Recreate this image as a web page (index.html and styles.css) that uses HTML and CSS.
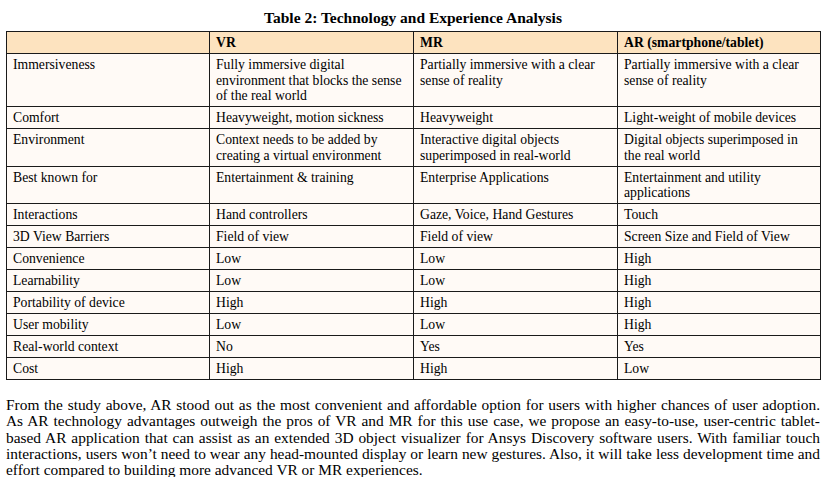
FILE: index.html
```html
<!DOCTYPE html>
<html>
<head>
<meta charset="utf-8">
<link rel="stylesheet" href="styles.css">
</head>
<body>
<div class="page">
  <h1 class="caption">Table 2: Technology and Experience Analysis</h1>
  <table class="analysis">
    <colgroup>
      <col class="c1"><col class="c2"><col class="c3"><col class="c4">
    </colgroup>
    <thead>
      <tr><th></th><th>VR</th><th>MR</th><th>AR (smartphone/tablet)</th></tr>
    </thead>
    <tbody>
      <tr><td>Immersiveness</td><td>Fully immersive digital environment that blocks the sense of the real world</td><td>Partially immersive with a clear sense of reality</td><td>Partially immersive with a clear sense of reality</td></tr>
      <tr><td>Comfort</td><td>Heavyweight, motion sickness</td><td>Heavyweight</td><td>Light-weight of mobile devices</td></tr>
      <tr><td>Environment</td><td>Context needs to be added by creating a virtual environment</td><td>Interactive digital objects superimposed in real-world</td><td>Digital objects superimposed in the real world</td></tr>
      <tr><td>Best known for</td><td>Entertainment &amp; training</td><td>Enterprise Applications</td><td>Entertainment and utility applications</td></tr>
      <tr><td>Interactions</td><td>Hand controllers</td><td>Gaze, Voice, Hand Gestures</td><td>Touch</td></tr>
      <tr><td>3D View Barriers</td><td>Field of view</td><td>Field of view</td><td>Screen Size and Field of View</td></tr>
      <tr><td>Convenience</td><td>Low</td><td>Low</td><td>High</td></tr>
      <tr><td>Learnability</td><td>Low</td><td>Low</td><td>High</td></tr>
      <tr><td>Portability of device</td><td>High</td><td>High</td><td>High</td></tr>
      <tr><td>User mobility</td><td>Low</td><td>Low</td><td>High</td></tr>
      <tr><td>Real-world context</td><td>No</td><td>Yes</td><td>Yes</td></tr>
      <tr><td>Cost</td><td>High</td><td>High</td><td>Low</td></tr>
    </tbody>
  </table>
  <p class="body-text">From the study above, AR stood out as the most convenient and affordable option for users with higher chances of user adoption. As AR technology advantages outweigh the pros of VR and MR for this use case, we propose an easy-to-use, user-centric tablet-based AR application that can assist as an extended 3D object visualizer for Ansys Discovery software users. With familiar touch interactions, users won’t need to wear any head-mounted display or learn new gestures. Also, it will take less development time and effort compared to building more advanced VR or MR experiences.</p>
</div>
</body>
</html>
```

FILE: styles.css
```css
html, body {
  margin: 0;
  padding: 0;
  background: #ffffff;
}

.page {
  padding: 9px 6px 0 6px;
  width: 814px;
  font-family: "Liberation Serif", "Times New Roman", Times, serif;
  color: #000;
}

.caption {
  margin: 0 0 4px 0;
  font-family: "Liberation Serif", "Times New Roman", Times, serif;
  font-size: 15.5px;
  line-height: 18px;
  font-weight: bold;
  text-align: center;
}

.analysis {
  width: 814px;
  border-collapse: collapse;
  table-layout: fixed;
  font-family: "Liberation Serif", "Times New Roman", Times, serif;
  font-size: 13.7px;
  line-height: 15.5px;
}

.analysis col.c1 { width: 203px; }
.analysis col.c2 { width: 204px; }
.analysis col.c3 { width: 204px; }
.analysis col.c4 { width: 203px; }

.analysis th,
.analysis td {
  border: 1px solid #1a1a1a;
  padding: 3px 6px 2.5px 6px;
  text-align: left;
  vertical-align: top;
  font-family: "Liberation Serif", "Times New Roman", Times, serif;
}

.analysis th {
  background: #fde3bf;
  font-weight: bold;
}

.analysis td {
  background: #fffaf6;
}

.body-text {
  margin: 17px 0 0 0;
  font-family: "Liberation Serif", "Times New Roman", Times, serif;
  font-size: 15.4px;
  line-height: 16.3px;
  text-align: justify;
}
```
